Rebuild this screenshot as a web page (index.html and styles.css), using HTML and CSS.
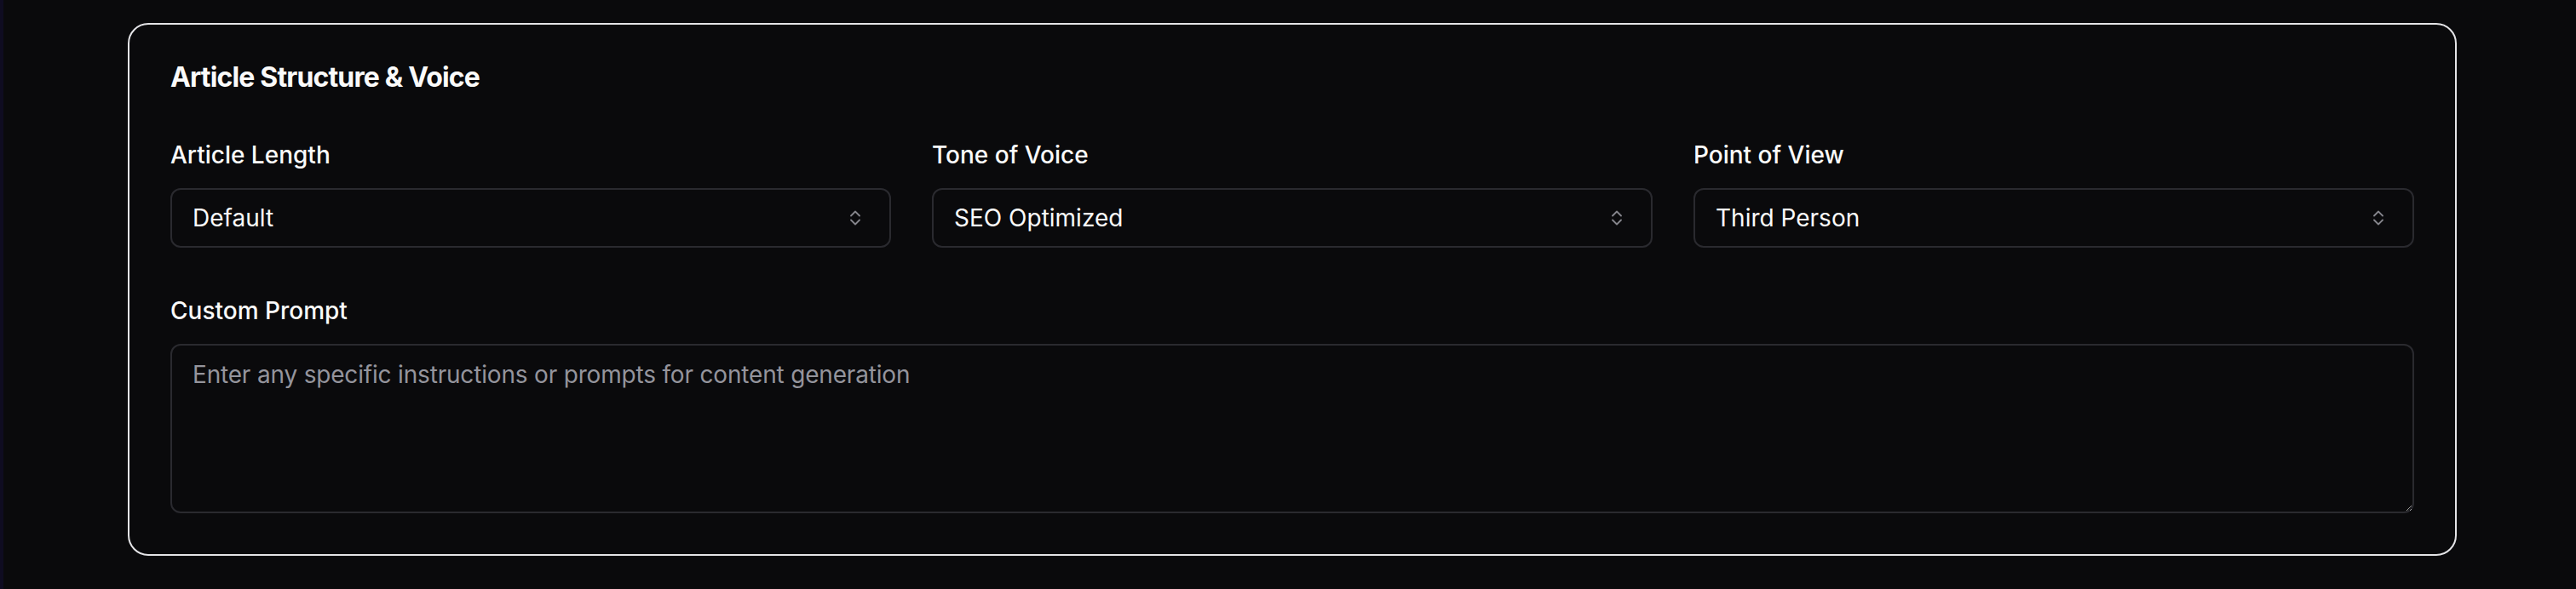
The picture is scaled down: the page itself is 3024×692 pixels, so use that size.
FILE: index.html
```html
<!DOCTYPE html>
<html lang="en">
<head>
<meta charset="utf-8">
<title>Article Structure &amp; Voice</title>
<link rel="stylesheet" href="styles.css">
</head>
<body>
<main class="page">
  <section class="card">
    <h2 class="card-title">Article Structure &amp; Voice</h2>
    <div class="fields">
      <div class="field">
        <label class="field-label">Article Length</label>
        <button class="select" type="button">
          <span class="select-value">Default</span>
          <span class="select-icon"><svg width="12" height="18" viewBox="0 0 12 18" fill="none" stroke="currentColor" stroke-width="1.8" stroke-linecap="round" stroke-linejoin="round"><polyline points="1,6.5 6,1.5 11,6.5"/><polyline points="1,11.5 6,16.5 11,11.5"/></svg></span>
        </button>
      </div>
      <div class="field">
        <label class="field-label">Tone of Voice</label>
        <button class="select" type="button">
          <span class="select-value">SEO Optimized</span>
          <span class="select-icon"><svg width="12" height="18" viewBox="0 0 12 18" fill="none" stroke="currentColor" stroke-width="1.8" stroke-linecap="round" stroke-linejoin="round"><polyline points="1,6.5 6,1.5 11,6.5"/><polyline points="1,11.5 6,16.5 11,11.5"/></svg></span>
        </button>
      </div>
      <div class="field">
        <label class="field-label">Point of View</label>
        <button class="select" type="button">
          <span class="select-value">Third Person</span>
          <span class="select-icon"><svg width="12" height="18" viewBox="0 0 12 18" fill="none" stroke="currentColor" stroke-width="1.8" stroke-linecap="round" stroke-linejoin="round"><polyline points="1,6.5 6,1.5 11,6.5"/><polyline points="1,11.5 6,16.5 11,11.5"/></svg></span>
        </button>
      </div>
    </div>
    <div class="field field-wide">
      <label class="field-label" for="prompt">Custom Prompt</label>
      <textarea id="prompt" class="textarea" placeholder="Enter any specific instructions or prompts for content generation"></textarea>
    </div>
  </section>
</main>
</body>
</html>
```

FILE: styles.css
```css
* {
  box-sizing: border-box;
}

html, body {
  margin: 0;
  padding: 0;
  background: #0a0a0c;
}

body {
  border-left: 4px solid #0f0c21;
  min-height: 692px;
  font-family: Inter, "Noto Sans", "Liberation Sans", sans-serif;
  color: #fafafa;
}

.page {
  padding: 27px 140px 0 146px;
}

.card {
  border: 2px solid #e4e4e7;
  border-radius: 24px;
  background: #0a0a0c;
  padding: 46px 48px 48px;
  display: flex;
  flex-direction: column;
}

.card-title {
  margin: 0;
  font-size: 32px;
  line-height: 32px;
  font-weight: 700;
  letter-spacing: -0.85px;
  color: #fafafa;
}

.fields {
  margin-top: 55px;
  display: grid;
  grid-template-columns: repeat(3, 1fr);
  gap: 48px;
}

.field {
  display: flex;
  flex-direction: column;
}

.field-wide {
  margin-top: 54px;
}

.field-label {
  font-size: 28px;
  line-height: 40px;
  font-weight: 500;
  color: #fafafa;
  margin-bottom: 19px;
}

.select {
  height: 70px;
  width: 100%;
  display: flex;
  align-items: center;
  justify-content: space-between;
  padding: 0 24px;
  border: 2px solid #2a2a2f;
  border-radius: 12px;
  background: #0a0a0c;
  color: #fafafa;
  font-family: inherit;
  font-size: 28px;
  font-weight: 400;
  text-align: left;
}

.select-value {
  line-height: 40px;
}

.select-icon {
  width: 32px;
  height: 32px;
  display: flex;
  align-items: center;
  justify-content: center;
  color: #85858c;
}

.textarea {
  height: 199px;
  width: 100%;
  padding: 14px 24px;
  border: 2px solid #2a2a2f;
  border-radius: 12px;
  background: #0a0a0c;
  color: #fafafa;
  font-family: inherit;
  font-size: 28px;
  line-height: 40px;
  letter-spacing: -0.18px;
  resize: vertical;
  color-scheme: dark;
  outline: none;
}

.textarea::placeholder {
  color: #94949c;
  opacity: 1;
}
```
